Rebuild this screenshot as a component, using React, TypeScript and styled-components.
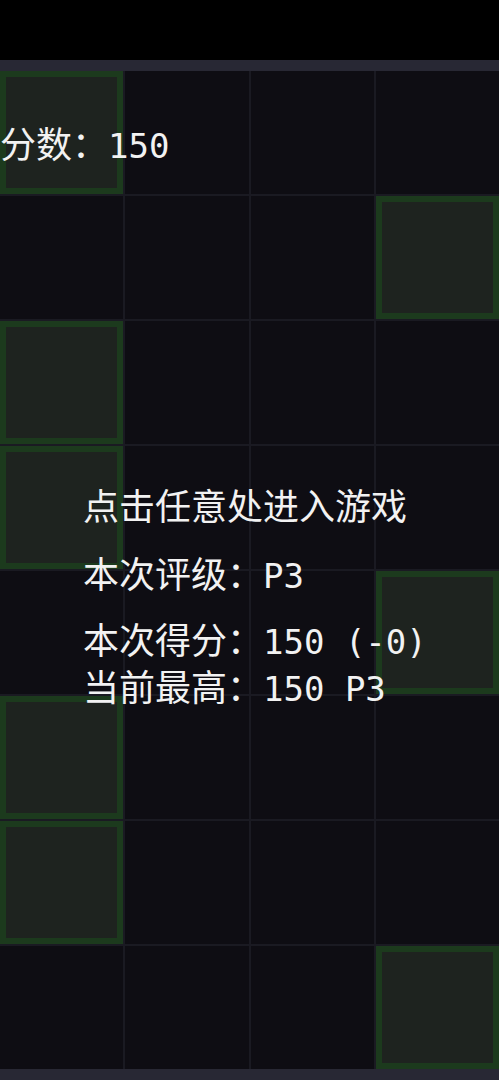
import styled, { createGlobalStyle } from 'styled-components';

const GlobalStyle = createGlobalStyle`
  html, body {
    margin: 0;
    padding: 0;
    background: #000;
  }
  body {
    font-family: "Noto Sans CJK SC", "Noto Sans", sans-serif;
    color: #f2f2f2;
  }
`;

// which column holds the green tile in each row
const rows = [0, 3, 0, 0, 3, 0, 0, 3];

const App = () => {
  return (
    <Page>
      <GlobalStyle />
      <TopBar />
      <Board>
        <Grid>
          {rows.map((lit, r) =>
            [0, 1, 2, 3].map((c) => <Cell key={`${r}-${c}`} $lit={c === lit} />)
          )}
        </Grid>
        <Score>
          分数：<Num>150</Num>
        </Score>
        <Overlay>
          <Title>点击任意处进入游戏</Title>
          <Rating>
            本次评级：<Num>P3</Num>
          </Rating>
          <Line>
            本次得分：<Num>150 (-0)</Num>
          </Line>
          <Line>
            当前最高：<Num>150 P3</Num>
          </Line>
        </Overlay>
      </Board>
    </Page>
  );
};

export default App;

const Page = styled.div`
  width: 499px;
  height: 1080px;
  overflow: hidden;
  background: #000;
`;

const TopBar = styled.div`
  height: 60px;
  background: #000;
`;

const Board = styled.div`
  position: relative;
  background: #282834;
  padding: 11px 0 12px;
`;

const Grid = styled.div`
  display: grid;
  grid-template-columns: repeat(4, 1fr);
  grid-auto-rows: 123px;
  gap: 2px;
  background: #1a1a22;
`;

const Cell = styled.div<{ $lit: boolean }>`
  box-sizing: border-box;
  background: ${(p) => (p.$lit ? '#1e231f' : '#0e0d13')};
  border: ${(p) => (p.$lit ? '6px solid #1c3a1d' : 'none')};
`;

const Num = styled.span`
  font-family: "DejaVu Sans Mono", "Liberation Mono", monospace;
  font-size: 34px;
  line-height: 1;
`;

const Score = styled.div`
  position: absolute;
  top: 59px;
  left: 0;
  font-size: 36px;
  line-height: 47px;
  white-space: nowrap;
`;

const Overlay = styled.div`
  position: absolute;
  inset: 0;
  display: flex;
  flex-direction: column;
  padding: 421px 0 0 83px;
  font-size: 36px;
  line-height: 47px;
  white-space: nowrap;
`;

const Title = styled.div`
  margin-bottom: 21px;
`;

const Rating = styled.div`
  margin-bottom: 19px;
`;

const Line = styled.div``;
